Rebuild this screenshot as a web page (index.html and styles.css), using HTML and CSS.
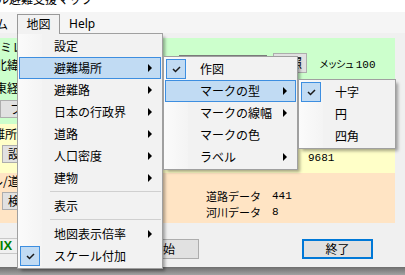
FILE: index.html
```html
<!DOCTYPE html>
<html lang="ja">
<head>
    <meta charset="UTF-8">
    <meta name="viewport" content="width=device-width, initial-scale=1.0">
    <title>避難支援マップ</title>
    <link rel="stylesheet" href="styles.css">
</head>
<body>
    <div class="titlebar">
        <span class="title">ル避難支援マップ</span>
        <span class="sysbtn">ー</span>
    </div>

    <div class="menubar">
        <span class="mtop cut">ム</span>
        <span class="mtop open">地図</span>
        <span class="mtop">Help</span>
    </div>

    <div class="form">
        <div class="panel green">
            <div class="left">
                <div class="lbl g1">ミレ</div>
                <div class="lbl g2">北緯</div>
                <div class="lbl g3">東経</div>
                <div class="sbtn first">ファイル</div>
            </div>
            <div class="right green-right">
                <input class="box" type="text" value="">
                <div class="btn small">参照</div>
                <div class="mesh"><span class="kana">メッシュ</span> <span class="num">100</span></div>
            </div>
        </div>

        <div class="panel yellow">
            <div class="left">
                <div class="lbl y1">避難所</div>
                <div class="sbtn">設定</div>
            </div>
            <div class="right yellow-right">
                <span class="num">9681</span>
            </div>
        </div>

        <div class="panel peach">
            <div class="left">
                <div class="lbl p1">ル/道路</div>
                <div class="sbtn">検索</div>
            </div>
            <div class="right peach-right">
                <div class="dline"><span class="dname">道路データ</span><span class="num">441</span></div>
                <div class="dline"><span class="dname">河川データ</span><span class="num">8</span></div>
            </div>
        </div>

        <div class="footer">
            <div class="left">
                <div class="mix">MIX</div>
            </div>
            <div class="btn start">開始</div>
            <div class="btn end">終了</div>
        </div>
    </div>

    <div class="taskbar"></div>

    <!-- 地図メニュー -->
    <div class="menu m1">
        <div class="mi">設定</div>
        <div class="mi hl">避難場所<i class="arr"></i></div>
        <div class="mi">避難路<i class="arr"></i></div>
        <div class="mi">日本の行政界<i class="arr"></i></div>
        <div class="mi">道路<i class="arr"></i></div>
        <div class="mi">人口密度<i class="arr"></i></div>
        <div class="mi">建物<i class="arr"></i></div>
        <div class="sep"></div>
        <div class="mi">表示</div>
        <div class="sep"></div>
        <div class="mi">地図表示倍率<i class="arr"></i></div>
        <div class="mi">
            <svg class="chk" width="20" height="20" viewBox="0 0 20 20"><rect x=".5" y=".5" width="19" height="19" fill="#c1dbf3" stroke="#3d8ee0"/><path d="M7 10l2.5 2.5 4.5-4.5" fill="none" stroke="#1a1a1a" stroke-width="1.5"/></svg>
            スケール付加
        </div>
    </div>

    <!-- 避難場所 -->
    <div class="menu m2">
        <div class="mi">
            <svg class="chk" width="20" height="20" viewBox="0 0 20 20"><rect x=".5" y=".5" width="19" height="19" fill="#c1dbf3" stroke="#3d8ee0"/><path d="M7 10l2.5 2.5 4.5-4.5" fill="none" stroke="#1a1a1a" stroke-width="1.5"/></svg>
            作図
        </div>
        <div class="mi hl">マークの型<i class="arr"></i></div>
        <div class="mi">マークの線幅<i class="arr"></i></div>
        <div class="mi">マークの色</div>
        <div class="mi">ラベル<i class="arr"></i></div>
    </div>

    <!-- マークの型 -->
    <div class="menu m3">
        <div class="mi">
            <svg class="chk" width="20" height="20" viewBox="0 0 20 20"><rect x=".5" y=".5" width="19" height="19" fill="#c1dbf3" stroke="#3d8ee0"/><path d="M7 10l2.5 2.5 4.5-4.5" fill="none" stroke="#1a1a1a" stroke-width="1.5"/></svg>
            十字
        </div>
        <div class="mi">円</div>
        <div class="mi">四角</div>
    </div>
</body>
</html>
```

FILE: styles.css
```css
body {
    margin: 0;
    width: 405px;
    height: 275px;
    overflow: hidden;
    position: relative;
    background-color: #f0f0f0;
    font-family: "Noto Sans CJK JP", "Noto Sans", sans-serif;
    font-size: 12px;
    color: #000;
}

/* タイトルバー（上が切れている） */
.titlebar {
    height: 12px;
    background-color: #ffffff;
    display: flex;
    justify-content: space-between;
    overflow: hidden;
}

.title {
    display: block;
    margin-top: -10px;
    margin-left: -3px;
    line-height: 18px;
}

.sysbtn {
    display: block;
    margin-top: -10px;
    margin-right: 12px;
    line-height: 18px;
    color: #333;
}

/* メニューバー */
.menubar {
    height: 21px;
    background-color: #f5f5f5;
    display: flex;
    align-items: flex-end;
}

.mtop {
    height: 18px;
    line-height: 18px;
    white-space: nowrap;
}

.mtop.cut {
    margin-left: -4px;
    margin-right: 9px;
}

.mtop.open {
    position: relative;
    z-index: 3;
    width: 43px;
    height: 20px;
    margin-bottom: -1px;
    box-sizing: border-box;
    text-align: center;
    line-height: 18px;
    border: 1px solid #999999;
    border-bottom: none;
    background-color: #f2f2f2;
}

.mtop:last-child {
    padding-left: 9px;
    font-family: "Noto Sans", sans-serif;
}

/* フォーム */
.form {
    padding-top: 5px;
}

.panel {
    width: 395px;
    display: flex;
    box-sizing: border-box;
}

.green {
    height: 86px;
    background-color: #ccffcc;
}

.yellow {
    height: 49px;
    background-color: #ffffc8;
}

.peach {
    height: 50px;
    background-color: #ffe4c4;
}

.left {
    width: 17px;
    flex-shrink: 0;
    overflow: hidden;
    display: flex;
    flex-direction: column;
}

.lbl {
    line-height: 14px;
    white-space: nowrap;
}

.g1 { margin-top: 2px; }
.g2 { margin-top: 4px; margin-left: -5px; }
.g3 { margin-top: 9px; margin-left: -5px; }
.y1 { margin-top: 3px; margin-left: -19px; }
.p1 { margin-top: 1px; margin-left: -9px; }

.sbtn {
    width: 40px;
    height: 18px;
    flex-shrink: 0;
    margin-top: 4px;
    margin-left: 2px;
    padding-left: 5px;
    box-sizing: border-box;
    line-height: 16px;
    white-space: nowrap;
    background-color: #e1e1e1;
    border: 1px solid #adadad;
}

.sbtn.first {
    margin-top: 5px;
    margin-left: 0;
    padding-left: 9px;
}

.right {
    display: flex;
}

.num {
    font-family: "Liberation Mono", monospace;
    font-size: 11px;
}

.green-right {
    padding-top: 15px;
    align-items: flex-start;
}

.box {
    margin: 2px 0 0 162px;
    width: 88px;
    height: 18px;
    padding: 0;
    box-sizing: border-box;
    border: 1px solid #7a7a7a;
    background-color: #ffffff;
}

.btn {
    box-sizing: border-box;
    background-color: #e1e1e1;
    border: 1px solid #adadad;
    text-align: center;
    line-height: 18px;
    white-space: nowrap;
}

.btn.small {
    margin-left: 6px;
    width: 34px;
    height: 20px;
}

.mesh {
    margin-left: 12px;
    line-height: 20px;
    white-space: nowrap;
}

.mesh .kana {
    font-size: 10px;
    letter-spacing: -1.5px;
}

.yellow-right {
    padding: 27px 0 0 291px;
    line-height: 14px;
}

.peach-right {
    flex-direction: column;
    padding: 15px 0 0 189px;
}

.dline {
    display: flex;
    line-height: 16px;
}

.dname {
    width: 66px;
    font-size: 11px;
}

/* 下段 */
.footer {
    height: 44px;
    display: flex;
    align-items: flex-start;
}

.mix {
    margin-top: 15px;
    width: 30px;
    height: 16px;
    box-sizing: border-box;
    border-top: 1px solid #c8c8c8;
    border-bottom: 1px solid #c8c8c8;
    text-indent: -11px;
    line-height: 14px;
    font-family: "Liberation Sans", Arial, sans-serif;
    font-size: 13px;
    font-weight: bold;
    color: #008000;
    white-space: nowrap;
}

.btn.start {
    margin: 16px 0 0 110px;
    width: 72px;
    height: 20px;
}

.btn.end {
    margin: 16px 0 0 103px;
    width: 71px;
    height: 20px;
    border: 2px solid #0078d7;
    line-height: 16px;
}

.taskbar {
    position: absolute;
    left: 0;
    bottom: 0;
    width: 100%;
    height: 8px;
    background: linear-gradient(#6e6e6e, #a2a2a2);
}

/* ドロップダウンメニュー */
.menu {
    position: absolute;
    z-index: 2;
    box-sizing: border-box;
    padding: 1px;
    border: 1px solid #a0a0a0;
    background: linear-gradient(to right, #fbfbfb 0, #f4f4f4 24px, #f2f2f2 24px);
    box-shadow: 3px 3px 3px -1px rgba(0, 0, 0, 0.35);
}

.m1 {
    left: 17px;
    top: 33px;
    width: 146px;
}

.m2 {
    left: 163px;
    top: 56px;
    width: 135px;
}

.m3 {
    left: 298px;
    top: 79px;
    width: 98px;
}

.mi {
    position: relative;
    height: 22px;
    box-sizing: border-box;
    padding-left: 34px;
    line-height: 20px;
    border: 1px solid transparent;
    white-space: nowrap;
}

.mi.hl {
    background-color: #c1dbf3;
    border-color: #3d8ee0;
}

.chk {
    position: absolute;
    left: 0;
    top: 0;
}

.arr {
    position: absolute;
    right: 8px;
    top: 6px;
    width: 0;
    height: 0;
    border-left: 4px solid #000;
    border-top: 4px solid transparent;
    border-bottom: 4px solid transparent;
}

.sep {
    height: 6px;
    margin-left: 31px;
    box-sizing: border-box;
    padding-top: 2px;
}

.sep::after {
    content: "";
    display: block;
    border-top: 1px solid #d0d0d0;
}
```
